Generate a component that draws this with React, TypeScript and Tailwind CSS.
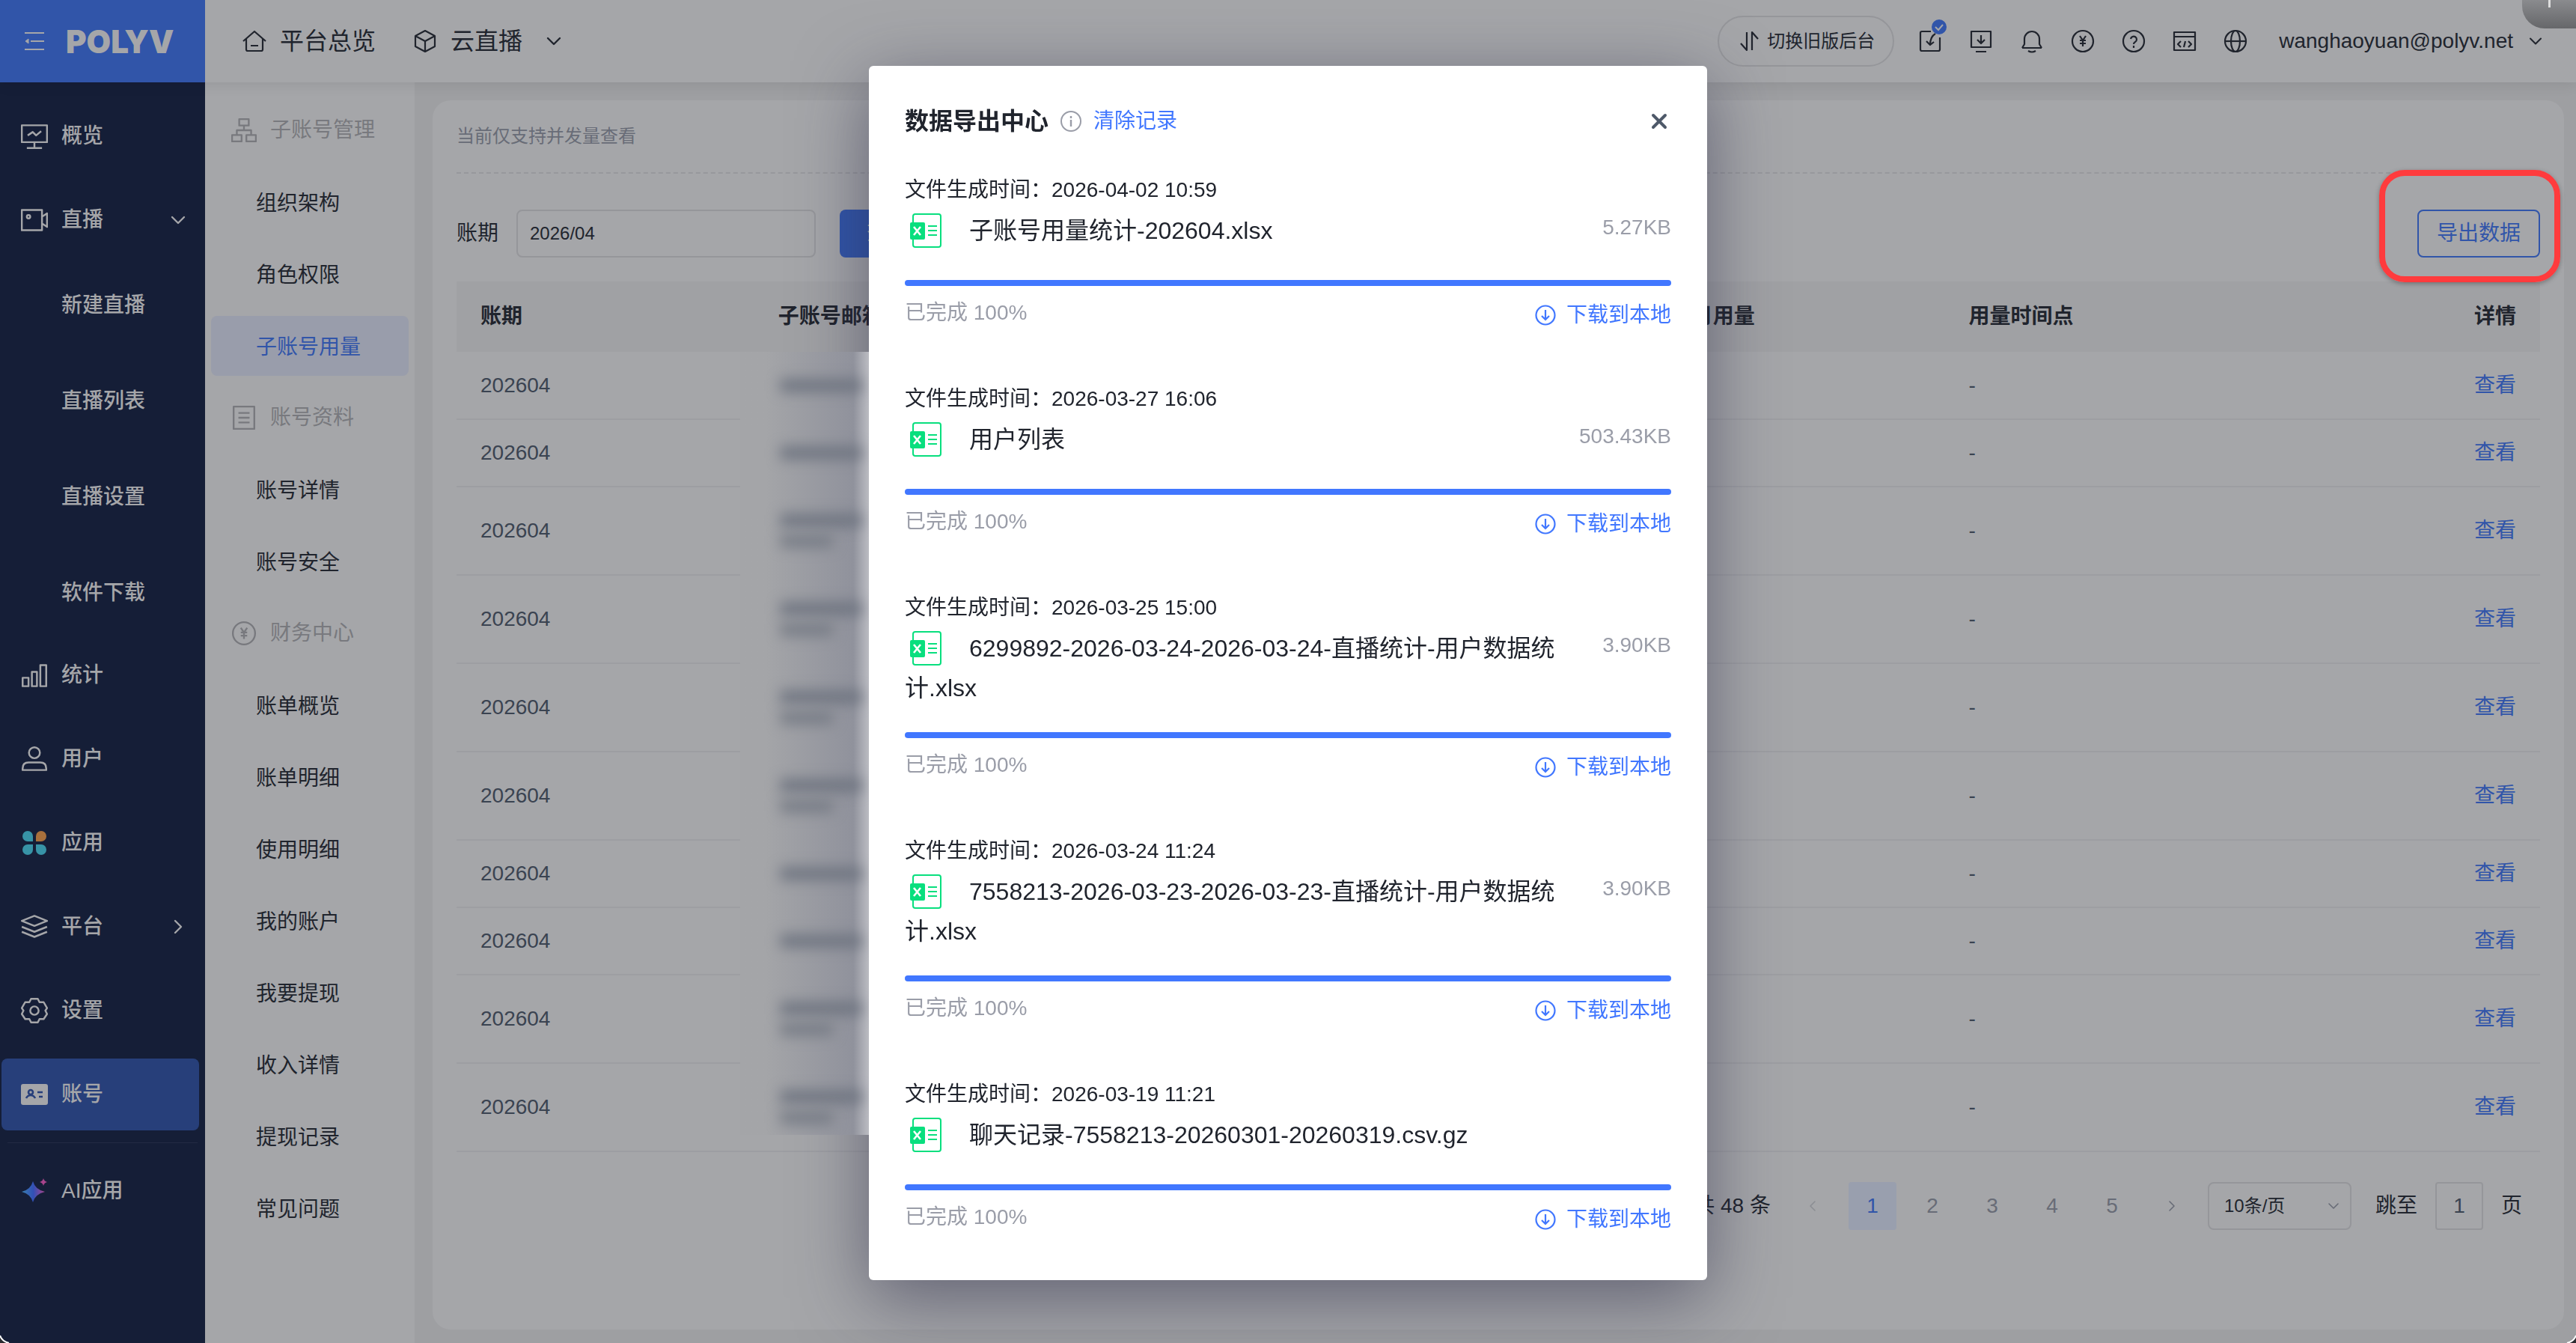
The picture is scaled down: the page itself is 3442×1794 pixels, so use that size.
import { useState } from "react"
import { ChevronDown, ChevronLeft, ChevronRight, X } from "lucide-react"

const exportRecords = [
  { id: 1, time: "2026-04-02 10:59", name: "子账号用量统计-202604.xlsx", size: "5.27KB" },
  { id: 2, time: "2026-03-27 16:06", name: "用户列表", size: "503.43KB" },
  { id: 3, time: "2026-03-25 15:00", name: "6299892-2026-03-24-2026-03-24-直播统计-用户数据统计.xlsx", size: "3.90KB" },
  { id: 4, time: "2026-03-24 11:24", name: "7558213-2026-03-23-2026-03-23-直播统计-用户数据统计.xlsx", size: "3.90KB" },
  { id: 5, time: "2026-03-19 11:21", name: "聊天记录-7558213-20260301-20260319.csv.gz", size: "" },
]

const liveMenu = ["新建直播", "直播列表", "直播设置", "软件下载"]

const subNav = [
  { title: "子账号管理", icon: "org", items: ["组织架构", "角色权限", "子账号用量"] },
  { title: "账号资料", icon: "doc", items: ["账号详情", "账号安全"] },
  {
    title: "财务中心",
    icon: "yen",
    items: ["账单概览", "账单明细", "使用明细", "我的账户", "我要提现", "收入详情", "提现记录", "常见问题"],
  },
]

// number of masked lines in the email column
const usageRows = [1, 1, 2, 2, 2, 2, 1, 1, 2, 2]

// Stroke icons on a 32x32 grid
const iconPaths: Record<string, React.ReactNode> = {
  fold: (
    <>
      <path d="M3 5h26M11 16h18M3 27h26" strokeWidth="2" />
      <path d="m8 13-4 3 4 3z" fill="currentColor" strokeWidth="1" />
    </>
  ),
  home: <path d="M1 16 16 3l15 13M5 13v14q0 2 2 2h18q2 0 2-2V13M11 22h10" />,
  cube: <path d="M16 2 29 9v14l-13 7-13-7V9zM3 9l13 7 13-7M16 16v14" />,
  swap: <path d="M13 4v24l-8-9M20 28V4l8 9" />,
  task: <path d="M17 3H5q-2 0-2 2v22q0 2 2 2h22q2 0 2-2V11M23 6q-7 4-7 15M11 16l5 5 5-4" />,
  download: <path d="M3 3h26v21H3zM9 30h14M16 8v11M11 14l5 5 5-5" />,
  bell: <path d="M3 25h26M3 25l3-5v-7a10 10 0 0 1 20 0v7l3 5M11 29q5 3 10 0" />,
  yen: <path d="M16 2a14 14 0 1 0 0 28 14 14 0 0 0 0-28M12 9l4 6 4-6M12 15h8M12 19h8M16 15v8" />,
  help: <path d="M16 2a14 14 0 1 0 0 28 14 14 0 0 0 0-28M12 13a4 4 0 1 1 6 4q-2 1-2 3M16 22v3" />,
  code: <path d="M2 4h28v24H2zM2 10h28M11 16l-4 4 4 4M21 16l4 4-4 4M17 16l-2 8" />,
  globe: (
    <>
      <circle cx="16" cy="16" r="14" />
      <ellipse cx="16" cy="16" rx="6" ry="14" />
      <path d="M2 16h28" />
    </>
  ),
  overview: <path d="M1 3h30v20H1zM16 23v6M7 30h18M8 15l6-4 4 4 6-5" />,
  video: (
    <>
      <path d="M1 4h24v24H1zM25 12l6-4v16l-6-4" />
      <circle cx="9" cy="12" r="2" />
    </>
  ),
  stats: <path d="M2 19h7v10H2zM13 12h6v17h-6zM23 4h7v25h-7z" />,
  user: <path d="M16 2a6 6 0 1 0 0 13 6 6 0 0 0 0-13M2 29v-2q0-7 7-7h14q7 0 7 7v2z" />,
  layers: <path d="M16 3 31 9l-15 6L1 9zM1 16l15 6 15-6M1 22l15 6 15-6" />,
  gear: (
    <>
      <path d="M12 2h8l2 4 5 0 4 7-2 3 2 4-4 6-5 0-2 4h-8l-2-4-5 0-4-6 2-4-2-3 4-7 5 0z" />
      <circle cx="16" cy="16" r="5" />
    </>
  ),
  org: <path d="M10 2h12v8H10zM1 22h12v8H1zM19 22h12v8H19zM16 10v6M7 22v-6h18v6" />,
  doc: <path d="M3 2h26v28H3zM9 10h14M9 16h14M9 22h14" />,
}

function Icon({ name, className = "size-8" }: { name: string; className?: string }) {
  return (
    <svg
      viewBox="0 0 32 32"
      className={`shrink-0 ${className}`}
      fill="none"
      stroke="currentColor"
      strokeWidth="2.2"
      strokeLinejoin="round"
      aria-hidden="true"
    >
      {iconPaths[name]}
    </svg>
  )
}

function AppsIcon() {
  return (
    <svg viewBox="0 0 36 36" className="size-9 shrink-0" aria-hidden="true">
      <path d="M16 16H9a7 7 0 1 1 7-7z" fill="#3793a6" />
      <path d="M20 16V9a7 7 0 1 1 7 7z" fill="#a8703c" />
      <path d="M16 20v7a7 7 0 1 1-7-7z" fill="#3793a6" />
      <path d="M20 20h7a7 7 0 1 1-7 7z" fill="#3793a6" />
    </svg>
  )
}

function AccountIcon() {
  return (
    <svg viewBox="0 0 36 36" className="size-9 shrink-0" aria-hidden="true">
      <rect y="4" width="36" height="28" rx="3" fill="#a5a6a9" />
      <g fill="none" stroke="#273f7a" strokeWidth="2.6">
        <circle cx="13" cy="15" r="3" />
        <path d="M7 23q2-4 6-4t6 4M22 15h7M24 21h5" />
      </g>
    </svg>
  )
}

function AiIcon() {
  return (
    <svg viewBox="0 0 36 36" className="size-9 shrink-0" aria-hidden="true">
      <defs>
        <linearGradient id="ai">
          <stop stopColor="#3a7fb0" />
          <stop offset=".5" stopColor="#3150b5" />
          <stop offset="1" stopColor="#a8448c" />
        </linearGradient>
      </defs>
      <path d="M16 5q3 11 16 14-13 3-16 14Q13 22 1 19 13 16 16 5" fill="url(#ai)" />
      <path d="M30 1q1 4 5 5-4 1-5 5-1-4-5-5 4-1 5-5" fill="#a8448c" />
    </svg>
  )
}

function ExcelIcon() {
  return (
    <svg viewBox="0 0 44 48" className="mr-9 mb-1.5 ml-1.5 inline-block h-12 w-11 align-middle" aria-hidden="true">
      <rect x="5" y="2" width="37" height="44" rx="3" fill="#fff" stroke="#08df7e" strokeWidth="2" />
      <rect x="1" y="13" width="20" height="23" rx="2" fill="#08df7e" />
      <path d="m6 19 9 11M15 19 6 30" stroke="#fff" strokeWidth="2.6" />
      <path d="M25 18h12M25 24h12M25 30h12" stroke="#08df7e" strokeWidth="2" />
    </svg>
  )
}

function Header() {
  return (
    <header className="relative flex h-[110px] items-center bg-[#a5a6a9] pr-10 text-[#20242d] shadow-[0_4px_16px_rgba(0,0,0,0.08)]">
      <div className="flex h-full w-[274px] shrink-0 items-center bg-[#3155a9] pl-[30px] text-[#a5a6a9]">
        <button aria-label="收起菜单">
          <Icon name="fold" />
        </button>
        <span className="ml-[26px] font-['Inter'] text-[42px] font-black">POLYV</span>
      </div>
      <a href="#overview" className="ml-[50px] flex items-center gap-[18px] text-[32px]">
        <Icon name="home" />
        平台总览
      </a>
      <button className="ml-[50px] flex items-center gap-[18px] text-[32px]">
        <Icon name="cube" />
        云直播
        <ChevronDown className="ml-2 size-8" strokeWidth={1.8} />
      </button>
      <div className="ml-auto flex items-center">
        <button className="mr-8 flex h-[68px] items-center gap-2 rounded-full border-2 border-[#95969a] px-6 text-2xl">
          <Icon name="swap" />
          切换旧版后台
        </button>
        <div className="flex items-center gap-9">
          <button aria-label="任务" className="relative">
            <Icon name="task" />
            <svg viewBox="0 0 20 20" className="absolute -top-[13px] left-[18px] size-5" aria-hidden="true">
              <circle cx="10" cy="10" r="10" fill="#3155a9" />
              <path d="m5 10 4 4 6-7" fill="none" stroke="#a5a6a9" strokeWidth="2" />
            </svg>
          </button>
          {["download", "bell", "yen", "help", "code", "globe"].map((name) => (
            <button key={name} aria-label={name}>
              <Icon name={name} />
            </button>
          ))}
        </div>
        <button className="ml-[42px] flex items-center gap-4 text-[28px]">
          wanghaoyuan@polyv.net
          <ChevronDown className="size-7" strokeWidth={1.8} />
        </button>
      </div>
    </header>
  )
}

const rowClass = "ml-[2px] mr-2 flex h-24 items-center gap-[18px] rounded-lg pl-[26px] pr-3"

function Sidebar() {
  return (
    <nav className="flex w-[274px] shrink-0 flex-col gap-4 bg-[#151e37] pt-6 text-[28px] font-medium text-[#a5a6a9]">
      <a href="#dashboard" className={rowClass}>
        <Icon name="overview" className="size-9" />
        概览
      </a>
      <button className={rowClass}>
        <Icon name="video" className="size-9" />
        直播
        <ChevronDown className="ml-auto size-8" strokeWidth={1.8} />
      </button>
      <div className="flex flex-col gap-8">
        {liveMenu.map((item) => (
          <a key={item} href="#live" className="flex h-24 items-center pt-1 pl-[82px]">
            {item}
          </a>
        ))}
      </div>
      <a href="#stats" className={rowClass}>
        <Icon name="stats" className="size-9" />
        统计
      </a>
      <a href="#users" className={rowClass}>
        <Icon name="user" className="size-9" />
        用户
      </a>
      <a href="#apps" className={rowClass}>
        <AppsIcon />
        应用
      </a>
      <button className={rowClass}>
        <Icon name="layers" className="size-9" />
        平台
        <ChevronRight className="ml-auto size-8" strokeWidth={1.8} />
      </button>
      <a href="#settings" className={rowClass}>
        <Icon name="gear" className="size-9" />
        设置
      </a>
      <a href="#account" className={`${rowClass} bg-[#273f7a]`}>
        <AccountIcon />
        账号
      </a>
      <hr className="mx-[10px] border-[#232b43]" />
      <a href="#ai" className={rowClass}>
        <AiIcon />
        AI应用
      </a>
    </nav>
  )
}

function SubNav() {
  return (
    <nav className="flex w-[280px] shrink-0 flex-col gap-4 bg-[#a5a6a9] px-2 pt-6 text-[28px] text-[#20242d]">
      {subNav.map((group) => (
        <div key={group.title} className="flex flex-col gap-4">
          <h3 className="flex h-20 items-center gap-[18px] pl-[27px] text-[#78797e]">
            <Icon name={group.icon} className="size-[34px]" />
            {group.title}
          </h3>
          {group.items.map((item) => (
            <a
              key={item}
              href="#account"
              className={`flex h-20 items-center rounded-lg pt-1 pl-[60px] ${
                item === "子账号用量" ? "bg-[#999dab] text-[#3155a9]" : ""
              }`}
            >
              {item}
            </a>
          ))}
        </div>
      ))}
    </nav>
  )
}

function UsageTable() {
  return (
    <div className="relative mt-8">
      <table className="w-full table-fixed text-[28px] text-[#3a4351]">
        <thead className="bg-[#a0a1a4] text-[#20242d]">
          <tr className="h-[94px] text-left">
            <th className="px-8 font-semibold">账期</th>
            <th className="px-8 font-semibold">子账号邮箱</th>
            <th />
            <th />
            <th className="px-8 font-semibold">当月用量</th>
            <th className="px-8 font-semibold">用量时间点</th>
            <th className="px-8 text-right font-semibold">详情</th>
          </tr>
        </thead>
        <tbody>
          {usageRows.map((lines, i) => (
            <tr key={i} className={`border-b-2 border-[#9d9ea2] ${lines === 2 ? "h-[118px]" : "h-[90px]"}`}>
              <td className="px-8">202604</td>
              <td />
              <td />
              <td />
              <td />
              <td className="px-8">-</td>
              <td className="px-8 text-right">
                <a href="#detail" className="text-[#3155a9]">
                  查看
                </a>
              </td>
            </tr>
          ))}
        </tbody>
      </table>

      {/* Mask over the email column */}
      <div className="absolute top-[94px] left-[379px] z-20 flex h-[1046px] w-[172px] flex-col overflow-hidden bg-linear-to-r from-[#a4a5a8] from-20% via-[#90929c] via-88% to-[#bbbcc2]">
        {usageRows.map((lines, i) => (
          <div
            key={i}
            className={`flex shrink-0 flex-col justify-center gap-3 pl-[54px] ${lines === 2 ? "h-[118px]" : "h-[90px]"}`}
          >
            <div className="h-4 w-[108px] bg-[#6c727e] blur-[9px]" />
            {lines === 2 && <div className="h-4 w-[70px] bg-[#757a84] blur-[9px]" />}
          </div>
        ))}
      </div>
    </div>
  )
}

function Pagination() {
  const [page, setPage] = useState(1)

  return (
    <div className="mt-10 flex items-center justify-end pr-6 text-[28px] text-[#20242d]">
      <span>共 48 条</span>
      <div className="ml-6 flex items-center gap-4 text-[#686c77]">
        <button aria-label="上一页" className="flex size-16 items-center justify-center text-[#8c8e93]">
          <ChevronLeft className="size-6" strokeWidth={1.6} />
        </button>
        {[1, 2, 3, 4, 5].map((n) => (
          <button
            key={n}
            onClick={() => setPage(n)}
            className={`size-16 rounded-sm ${n === page ? "bg-[#999fae] text-[#3155a9]" : ""}`}
          >
            {n}
          </button>
        ))}
        <button aria-label="下一页" className="flex size-16 items-center justify-center">
          <ChevronRight className="size-6" strokeWidth={1.6} />
        </button>
      </div>
      <div className="relative ml-4">
        <select
          aria-label="每页条数"
          className="h-16 w-48 appearance-none rounded-lg border-2 border-[#95969a] bg-transparent pl-5 text-2xl"
        >
          <option>10条/页</option>
        </select>
        <ChevronDown className="pointer-events-none absolute top-5 right-3 size-6 text-[#686c77]" strokeWidth={1.6} />
      </div>
      <label className="ml-8 flex items-center gap-6">
        跳至
        <input
          defaultValue="1"
          className="size-16 rounded-sm border-2 border-[#95969a] bg-transparent text-center text-[#3a4351]"
        />
        页
      </label>
    </div>
  )
}

function ExportDialog({ onClose }: { onClose: () => void }) {
  return (
    <div className="fixed inset-0 z-10 flex items-start justify-center pt-[88px]">
      <div
        role="dialog"
        aria-label="数据导出中心"
        className="w-[1120px] rounded-md bg-white px-12 pt-[50px] pb-[58px] text-[28px] text-[#20242d] shadow-[0_24px_96px_rgba(40,40,70,0.55)]"
      >
        <div className="flex h-12 items-center">
          <h2 className="text-[32px] font-semibold">数据导出中心</h2>
          <svg viewBox="0 0 28 28" className="ml-4 size-7" fill="none" stroke="#9a9da8" strokeWidth="2" aria-hidden="true">
            <circle cx="14" cy="14" r="13" />
            <path d="M14 12v9M14 7v3" strokeWidth="2.4" />
          </svg>
          <button className="ml-4 text-[#4177ff]">清除记录</button>
          <button aria-label="关闭" onClick={onClose} className="ml-auto text-[#4e5969]">
            <X className="size-8" strokeWidth={3} />
          </button>
        </div>

        <ul className="mt-12 flex flex-col gap-[69px]">
          {exportRecords.map((record) => (
            <li key={record.id}>
              <p className="leading-10">文件生成时间：{record.time}</p>
              <div className="flex justify-between pb-9">
                <p className="w-[896px] pt-[10px] text-[32px] leading-[46px] break-words">
                  <ExcelIcon />
                  {record.name}
                </p>
                <span className="pt-[10px] leading-10 text-[#9a9da8]">{record.size}</span>
              </div>
              <div className="h-2 rounded-full bg-[#4177ff]" />
              <div className="mt-4 flex items-start justify-between">
                <span className="leading-10 text-[#9a9da8]">已完成 100%</span>
                <button className="flex items-center gap-[14px] leading-[46px] text-[#4177ff]">
                  <svg viewBox="0 0 28 28" className="size-7" fill="none" stroke="currentColor" strokeWidth="2.2" aria-hidden="true">
                    <circle cx="14" cy="14" r="12.5" />
                    <path d="M14 7v13M9 15l5 5 5-5" />
                  </svg>
                  下载到本地
                </button>
              </div>
            </li>
          ))}
        </ul>
      </div>
    </div>
  )
}

export default function App() {
  const [isOpen, setIsOpen] = useState(true)

  return (
    <div className="relative flex min-h-screen flex-col overflow-hidden bg-[#9e9fa2] font-['Liberation_Sans','Noto_Sans_CJK_SC',sans-serif]">
      <Header />
      <div className="flex flex-1">
        <Sidebar />
        <SubNav />
        <main className="flex min-w-0 flex-1 pt-6 pr-4 pb-[18px] pl-6">
          <section className="min-w-0 flex-1 rounded-3xl bg-[#a5a6a9] px-8 text-[28px] text-[#20242d]">
            <p className="border-b-2 border-dashed border-[#97989c] py-8 text-2xl text-[#686c77]">
              当前仅支持并发量查看
            </p>
            <div className="mt-12 flex items-center">
              <label className="flex items-center gap-6">
                账期
                <input
                  defaultValue="2026/04"
                  className="h-16 w-[400px] rounded-lg border-2 border-[#95969a] bg-transparent px-4 text-2xl"
                />
              </label>
              <button className="ml-8 h-16 rounded-lg bg-[#3155a9] px-9 text-[#a5a6a9]">查询</button>
              <div className="relative ml-auto">
                <button onClick={() => setIsOpen(true)} className="h-16 w-[164px] rounded-lg border-2 border-[#3155a9] text-[#3155a9]">
                  导出数据
                </button>
                <div className="pointer-events-none absolute -top-[53px] -right-[27px] -bottom-[33px] -left-[51px] z-20 rounded-[34px] border-8 border-[#ff3b3d] shadow-[0_2px_6px_rgba(0,0,0,0.3)]" />
              </div>
            </div>
            <UsageTable />
            <Pagination />
          </section>
        </main>
      </div>

      {/* Floating handle in the window corner */}
      <div className="absolute top-0 right-0 flex h-[38px] w-[72px] justify-center rounded-bl-[30px] bg-linear-to-b from-[#8a8b8e] to-[#66676a]">
        <div className="h-[10px] w-[3px] bg-[#dddddd]" />
      </div>

      {/* Rounded window corners */}
      <svg viewBox="0 0 16 16" className="absolute bottom-0 left-0 size-4" aria-hidden="true">
        <path d="M0 6q3 8 12 10H0z" fill="#2a2b30" />
        <path d="M0 6q3 8 12 10" fill="none" stroke="#fff" strokeWidth="2" />
      </svg>
      <svg viewBox="0 0 16 16" className="absolute right-0 bottom-0 size-4" aria-hidden="true">
        <path d="M16 6q-3 8-12 10h12z" fill="#2a2b30" />
        <path d="M16 6q-3 8-12 10" fill="none" stroke="#fff" strokeWidth="2" />
      </svg>

      {isOpen && <ExportDialog onClose={() => setIsOpen(false)} />}
    </div>
  )
}
